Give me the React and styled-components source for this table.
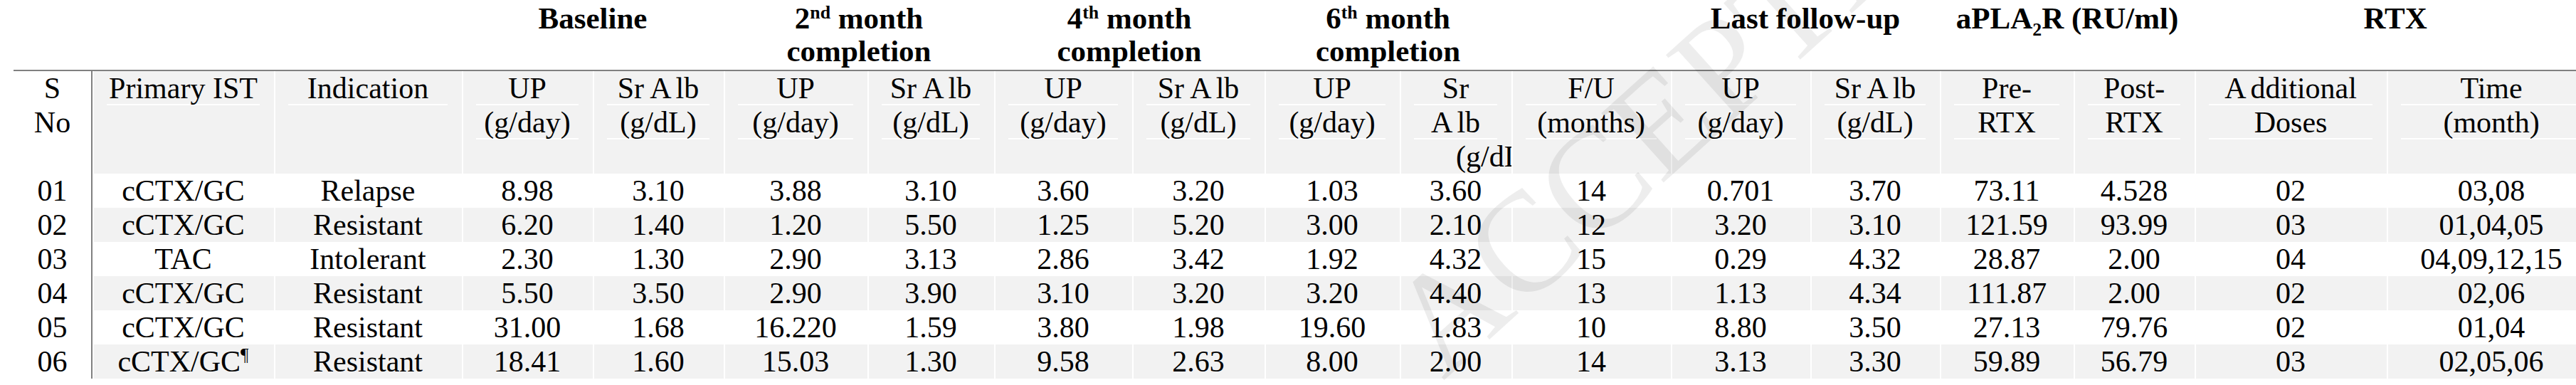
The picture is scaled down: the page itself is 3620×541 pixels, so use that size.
import styled, { createGlobalStyle } from "styled-components";

const GlobalStyle = createGlobalStyle`
  html, body {
    margin: 0;
    padding: 0;
    background: #fff;
    overflow: hidden;
  }
  body {
    font-family: "Liberation Serif", "Times New Roman", serif;
    color: #000;
  }
`;

const Page = styled.div`
  position: relative;
  width: 3620px;
  height: 541px;
  overflow: hidden;
  padding-left: 19px;
  box-sizing: border-box;
`;

const Table = styled.table`
  border-collapse: collapse;
  table-layout: fixed;
  width: 3629px;
  font-size: 42px;
  line-height: 48px;
`;

const Col = styled.col`
  width: ${(p) => p.$w}px;
`;

const GroupCell = styled.th`
  height: 95px;
  padding: 3px 0 0;
  vertical-align: top;
  text-align: center;
  font-size: 43px;
  line-height: 46px;
  font-weight: bold;
  border-bottom: 2px solid #808080;
  white-space: nowrap;

  sup,
  sub {
    font-size: 0.6em;
    line-height: 0;
  }
  sup {
    vertical-align: 0.55em;
  }
`;

const HeadCell = styled.th`
  padding: 0;
  vertical-align: top;
  text-align: center;
  font-weight: normal;
  background: ${(p) => (p.$plain ? "#fff" : "#f2f2f2")};
  box-shadow: ${(p) => (p.$plain ? "none" : "inset 2px 0 0 #fff")};
  border-right: ${(p) => (p.$plain ? "2px solid #808080" : "none")};
  overflow: hidden;
`;

const HeadLine = styled.div`
  height: 48px;
  margin: 0 ${(p) => (p.$plain ? 0 : 20)}px;
  box-shadow: ${(p) => (p.$plain ? "none" : "inset 0 -2px 0 #fff")};
  white-space: nowrap;
`;

const ClipLine = styled.div`
  height: 48px;
  padding-left: 79px;
  text-align: left;
  white-space: nowrap;
`;

const Gap = styled.span`
  margin-right: 6px;
`;

const Row = styled.tr`
  td {
    background: ${(p) => (p.$alt ? "#f2f2f2" : "#fff")};
    box-shadow: ${(p) => (p.$alt ? "inset 2px 0 0 #fff" : "none")};
  }
`;

const Cell = styled.td`
  height: 48px;
  padding: 0;
  text-align: center;
  white-space: nowrap;
  vertical-align: top;

  sup {
    font-size: 0.6em;
    line-height: 0;
  }
`;

const NoCell = styled(Cell)`
  && {
    background: #fff;
    box-shadow: none;
  }
  border-right: 2px solid #808080;
`;

const Watermark = styled.span`
  position: absolute;
  left: 2050px;
  top: 360px;
  font-size: 200px;
  line-height: 200px;
  color: rgba(0, 0, 0, 0.07);
  white-space: nowrap;
  transform: rotate(-42deg);
  transform-origin: left bottom;
  pointer-events: none;
`;

const SrAlb = (
  <>
    Sr <Gap>A</Gap>lb
  </>
);

const columns = [
  { w: 110, head: ["S", "No"], plain: true },
  { w: 256, head: ["Primary IST"] },
  { w: 264, head: ["Indication"] },
  { w: 184, head: ["UP", "(g/day)"] },
  { w: 184, head: [SrAlb, "(g/dL)"] },
  { w: 202, head: ["UP", "(g/day)"] },
  { w: 178, head: [SrAlb, "(g/dL)"] },
  { w: 194, head: ["UP", "(g/day)"] },
  { w: 186, head: [SrAlb, "(g/dL)"] },
  { w: 190, head: ["UP", "(g/day)"] },
  {
    w: 157,
    head: [
      "Sr",
      <>
        <Gap>A</Gap>lb
      </>,
    ],
    clip: "(g/dL)",
  },
  { w: 224, head: ["F/U", "(months)"] },
  { w: 196, head: ["UP", "(g/day)"] },
  { w: 182, head: [SrAlb, "(g/dL)"] },
  { w: 188, head: ["Pre-", "RTX"] },
  { w: 170, head: ["Post-", "RTX"] },
  { w: 270, head: [<><Gap>A</Gap>dditional</>, "Doses"] },
  { w: 294, head: ["Time", "(month)"] },
];

const rows = [
  ["01", "cCTX/GC", "Relapse", "8.98", "3.10", "3.88", "3.10", "3.60", "3.20", "1.03", "3.60", "14", "0.701", "3.70", "73.11", "4.528", "02", "03,08"],
  ["02", "cCTX/GC", "Resistant", "6.20", "1.40", "1.20", "5.50", "1.25", "5.20", "3.00", "2.10", "12", "3.20", "3.10", "121.59", "93.99", "03", "01,04,05"],
  ["03", "TAC", "Intolerant", "2.30", "1.30", "2.90", "3.13", "2.86", "3.42", "1.92", "4.32", "15", "0.29", "4.32", "28.87", "2.00", "04", "04,09,12,15"],
  ["04", "cCTX/GC", "Resistant", "5.50", "3.50", "2.90", "3.90", "3.10", "3.20", "3.20", "4.40", "13", "1.13", "4.34", "111.87", "2.00", "02", "02,06"],
  ["05", "cCTX/GC", "Resistant", "31.00", "1.68", "16.220", "1.59", "3.80", "1.98", "19.60", "1.83", "10", "8.80", "3.50", "27.13", "79.76", "02", "01,04"],
  ["06", "cCTX/GC¶", "Resistant", "18.41", "1.60", "15.03", "1.30", "9.58", "2.63", "8.00", "2.00", "14", "3.13", "3.30", "59.89", "56.79", "03", "02,05,06"],
];

// trailing ¶ is a footnote mark, drawn raised
const renderValue = (v) =>
  v.endsWith("¶") ? (
    <>
      {v.slice(0, -1)}
      <sup>¶</sup>
    </>
  ) : (
    v
  );

export default function App() {
  return (
    <Page>
      <GlobalStyle />
      <Table>
        <colgroup>
          {columns.map((c, i) => (
            <Col key={i} $w={c.w} />
          ))}
        </colgroup>
        <thead>
          <tr>
            <GroupCell colSpan={3} />
            <GroupCell colSpan={2}>Baseline</GroupCell>
            <GroupCell colSpan={2}>
              2<sup>nd</sup> month
              <br />
              completion
            </GroupCell>
            <GroupCell colSpan={2}>
              4<sup>th</sup> month
              <br />
              completion
            </GroupCell>
            <GroupCell colSpan={2}>
              6<sup>th</sup> month
              <br />
              completion
            </GroupCell>
            <GroupCell />
            <GroupCell colSpan={2}>Last follow-up</GroupCell>
            <GroupCell colSpan={2}>
              aPLA<sub>2</sub>R (RU/ml)
            </GroupCell>
            <GroupCell colSpan={2}>RTX</GroupCell>
          </tr>
          <tr>
            {columns.map((c, i) => (
              <HeadCell key={i} $plain={c.plain}>
                {c.head.map((line, j) => (
                  <HeadLine key={j} $plain={c.plain}>
                    {line}
                  </HeadLine>
                ))}
                {c.clip && <ClipLine>{c.clip}</ClipLine>}
                {c.head.length < 3 && !c.clip && (
                  <HeadLine $plain>{"\u00a0"}</HeadLine>
                )}
              </HeadCell>
            ))}
          </tr>
        </thead>
        <tbody>
          {rows.map((r, i) => (
            <Row key={i} $alt={i % 2 === 1}>
              {r.map((v, j) =>
                j === 0 ? (
                  <NoCell key={j}>{v}</NoCell>
                ) : (
                  <Cell key={j}>{renderValue(v)}</Cell>
                )
              )}
            </Row>
          ))}
        </tbody>
      </Table>
      <Watermark>ACCEPTED MANUSCRIPT</Watermark>
    </Page>
  );
}
